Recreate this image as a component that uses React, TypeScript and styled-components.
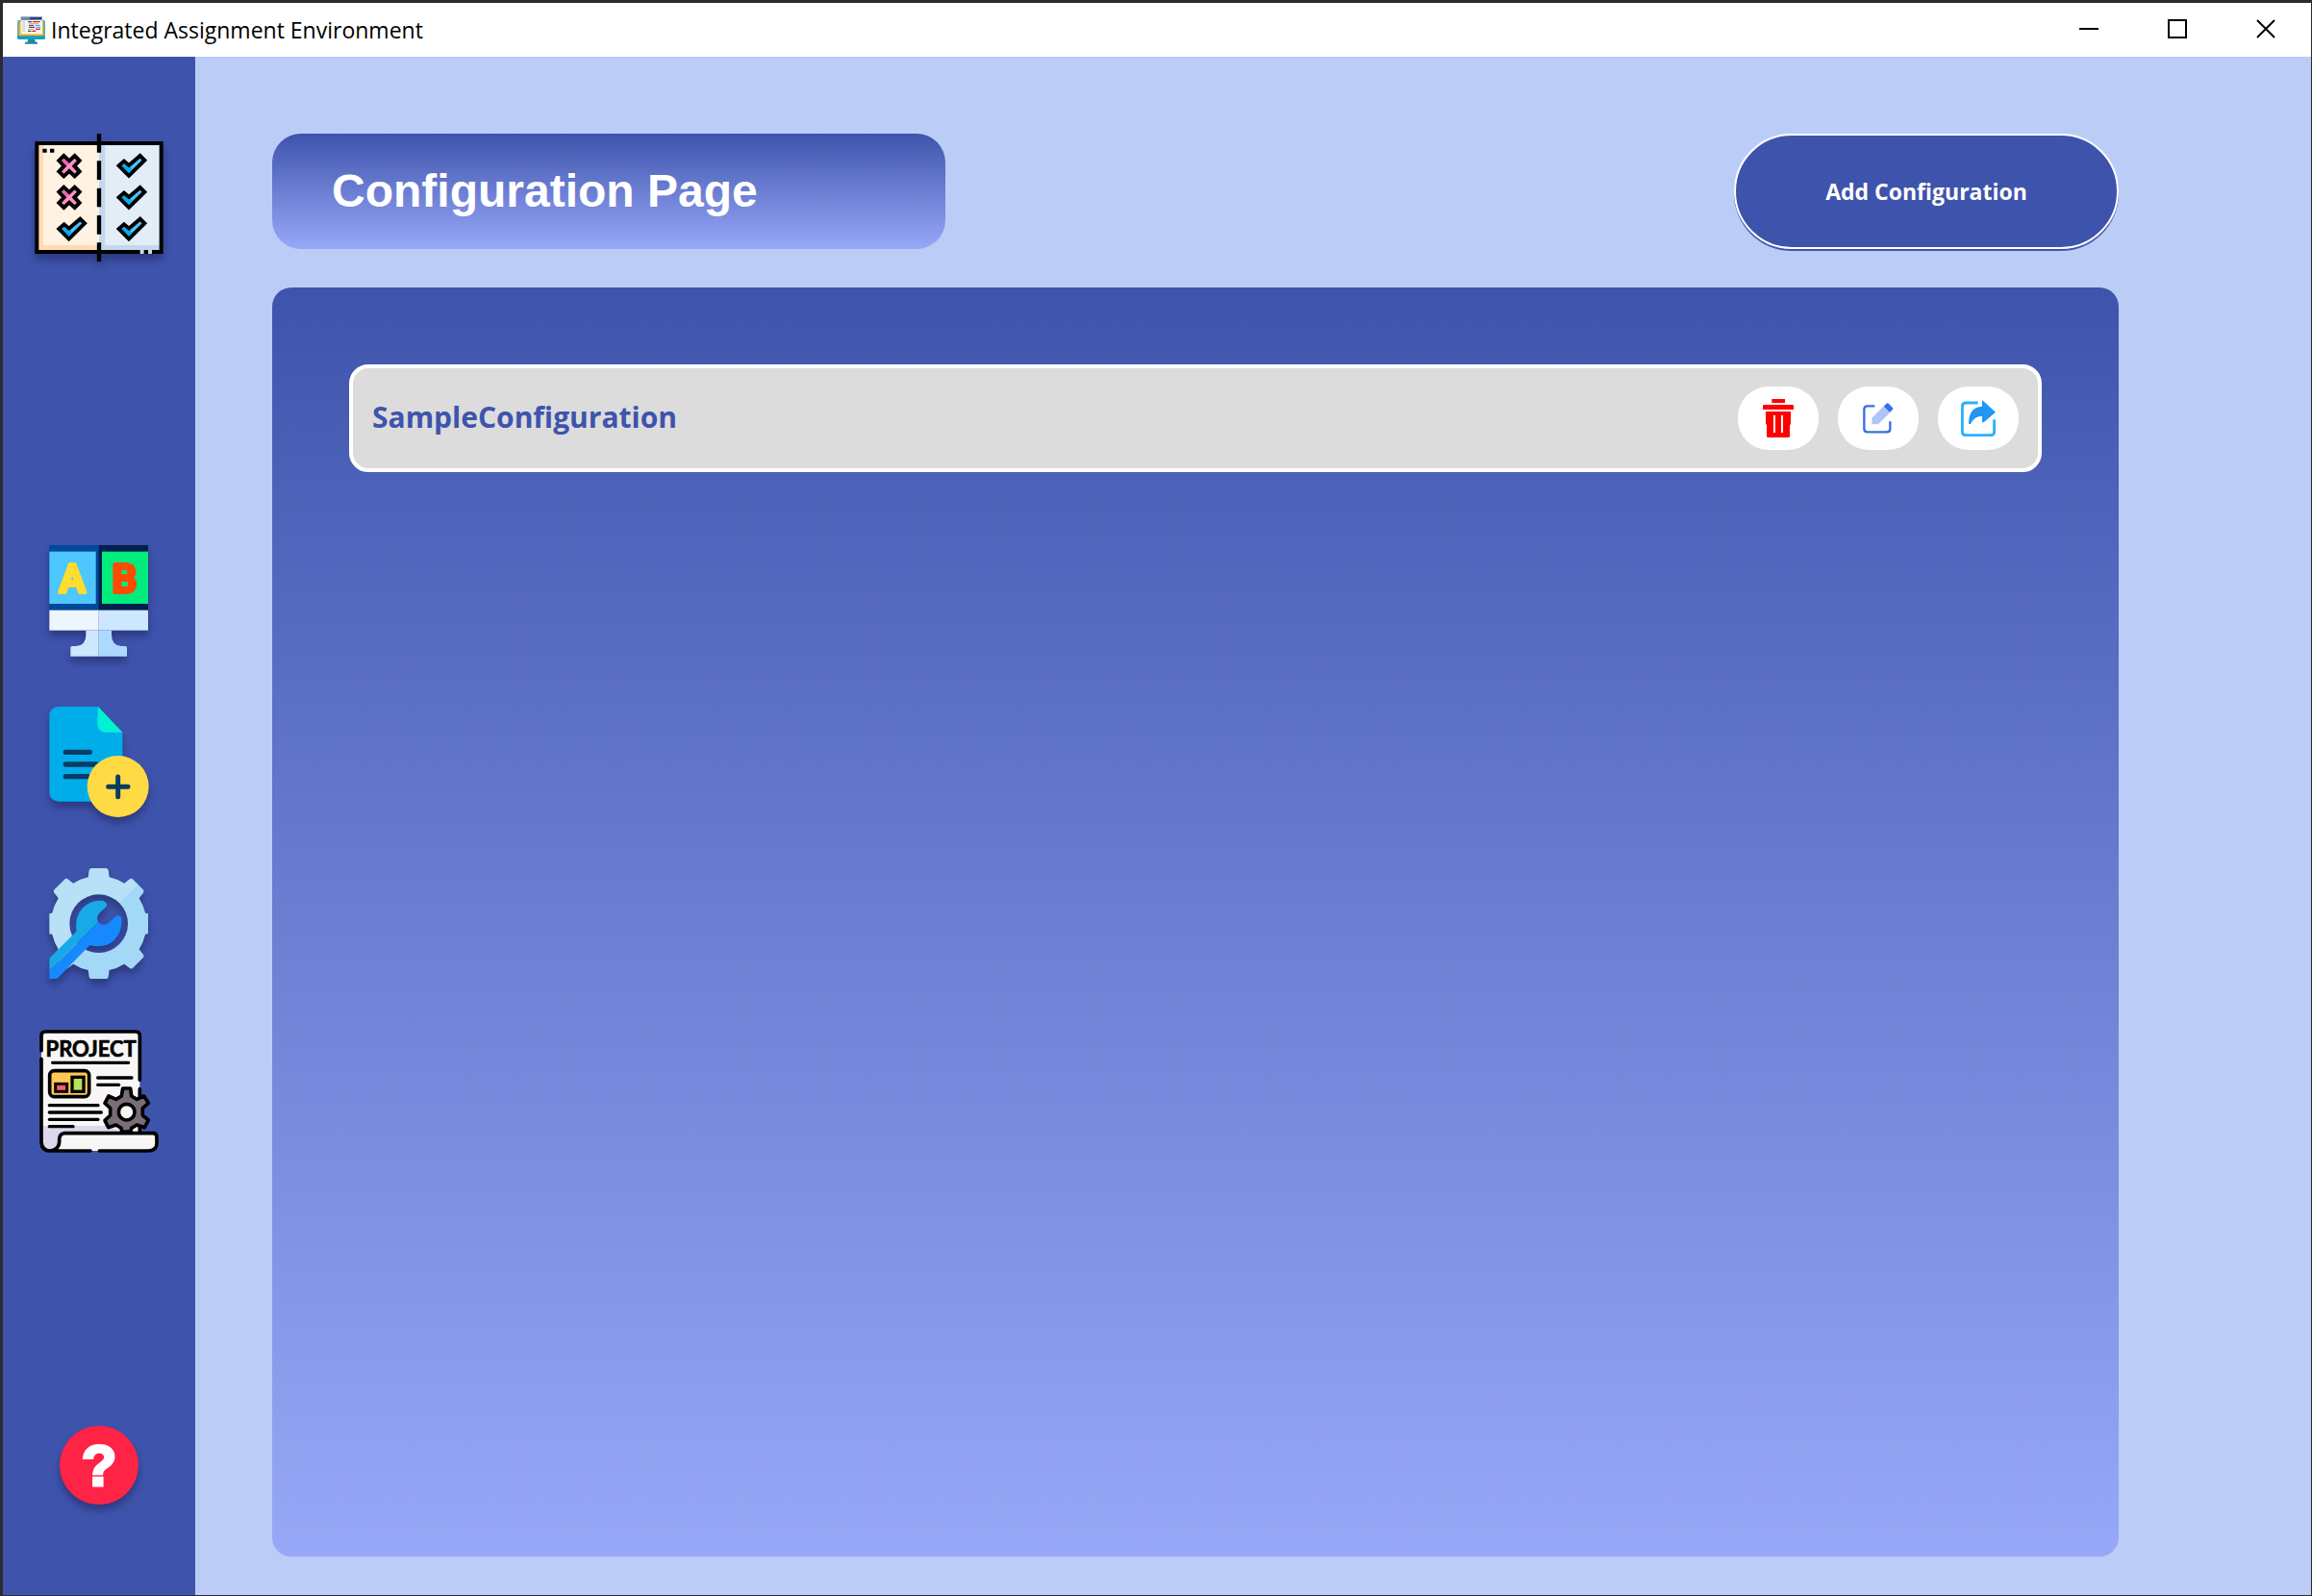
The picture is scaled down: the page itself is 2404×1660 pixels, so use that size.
import React from "react";
import styled, { createGlobalStyle } from "styled-components";

const GlobalStyle = createGlobalStyle`
  * { box-sizing: border-box; }
  body { margin: 0; background: #2b2b2e; }
  button { font: inherit; color: inherit; border: 0; background: none; padding: 0; cursor: pointer; }
`;

const uiFont = `"Segoe UI", "Open Sans", "Noto Sans", sans-serif`;

const Window = styled.div`
  min-height: 100vh;
  display: flex;
  flex-direction: column;
  border: 1px solid #2b2b2e;
  border-width: 3px 1px 1px 3px;
  font-family: ${uiFont};
  background: #bbccf7;
`;

const TitleBar = styled.header`
  display: flex;
  align-items: center;
  height: 56px;
  padding: 0 1px 0 15px;
  background: #ffffff;
`;

const TitleText = styled.span`
  flex: 1;
  margin-left: 6px;
  font-size: 23px;
  line-height: 32px;
  color: #000000;
`;

const WindowButton = styled.button`
  display: flex;
  align-items: center;
  justify-content: center;
  width: 92px;
  height: 54px;
  align-self: flex-start;
`;

const Body = styled.div`
  flex: 1;
  display: flex;
`;

const Sidebar = styled.nav`
  width: 200px;
  flex: none;
  display: flex;
  flex-direction: column;
  align-items: center;
  padding: 79px 0 93px;
  background: #3e54ac;
`;

const NavGroup = styled.div`
  display: flex;
  flex-direction: column;
  align-items: center;
  gap: 51px;
  margin-top: 294px;
`;

const NavButton = styled.button<{ $flat?: boolean; $last?: boolean }>`
  display: block;
  margin-top: ${(p) => (p.$last ? "auto" : "0")};
  filter: ${(p) => (p.$flat ? "none" : "drop-shadow(0 6px 4px rgba(20, 24, 70, 0.45))")};

  svg { display: block; }
`;

const Main = styled.main`
  flex: 1;
  display: flex;
  flex-direction: column;
  gap: 40px;
  padding: 80px 200px 40px 80px;
`;

const PageHeader = styled.div`
  display: flex;
  justify-content: space-between;
`;

const PageTitle = styled.h1`
  width: 700px;
  height: 120px;
  margin: 0;
  padding-left: 62px;
  border-radius: 30px;
  background: linear-gradient(#3e54ac, #98a8f8);
  color: #ffffff;
  font: bold 48px/120px Arial, "Liberation Sans", sans-serif;
`;

const AddButton = styled.button`
  width: 400px;
  height: 120px;
  border: 2px solid #ffffff;
  border-radius: 60px;
  background: #3e54ac;
  box-shadow: 0 2px 0 #3e54ac;
  color: #ffffff;
  font-weight: 700;
  font-size: 23px;
  line-height: 32px;
`;

const Panel = styled.section`
  flex: 1;
  padding: 80px;
  border-radius: 20px;
  background: linear-gradient(#3e54ac, #98a8f8);
`;

const ConfigRow = styled.article`
  display: flex;
  align-items: center;
  gap: 20px;
  height: 112px;
  padding: 0 20px;
  border: 4px solid #ffffff;
  border-radius: 20px;
  background: #dcdcdc;
`;

const ConfigName = styled.h2`
  flex: 1;
  margin: 0;
  padding-bottom: 2px;
  color: #3e54ac;
  font-size: 30px;
  line-height: 40px;
  font-weight: 700;
`;

const ActionButton = styled.button`
  display: flex;
  align-items: center;
  justify-content: center;
  width: 84px;
  height: 66px;
  border-radius: 32px;
  background: #ffffff;
`;

const AppIcon = () => (
  <svg width="29" height="29" viewBox="54 48 87 87" aria-hidden="true">
    <rect x="54" y="60" width="87" height="60" rx="6" fill="#5aa9b8" />
    <rect x="59" y="65" width="77" height="44" fill="#fdb813" />
    <path d="M54 109h87v5a6 6 0 0 1-6 6H60a6 6 0 0 1-6-6z" fill="#16a0c4" />
    <path d="M88 120h20l3 8h6v6H78v-6h7z" fill="#1f86a4" />
    <rect x="65" y="49" width="67" height="54" fill="#f4f6f8" />
    <rect x="65" y="49" width="67" height="11" fill="#7588a6" />
    <path d="M93 54h36" stroke="#123a63" strokeWidth="5" />
    <path d="M70 65h8M70 72h8M70 79h8M70 86h8M70 93h8" stroke="#aebccc" strokeWidth="3" />
    <path d="M87 65h12M90 82h18M87 94h10" stroke="#1d5b8a" strokeWidth="4" />
    <path d="M102 65h23M90 76h15M111 88h15M100 94h12" stroke="#d81b60" strokeWidth="4" />
    <path d="M90 70h30M87 88h18" stroke="#f2a51a" strokeWidth="3" />
    <path d="M109 76h16M112 82h14" stroke="#2aa3c9" strokeWidth="3" />
  </svg>
);

const Check = ({ x, y }: { x: number; y: number }) => (
  <g transform={`translate(${x} ${y})`}>
    <path d="M2 0L18-14L33-1L68-31L82-17L33 31Z" fill="#4fc3f7" stroke="#000" strokeWidth="12" />
    <path d="M11 0L18-6L33 7L39 3L42 15L33 23Z" fill="#00aeef" />
  </g>
);

const Cross = ({ x, y }: { x: number; y: number }) => (
  <g transform={`translate(${x} ${y})`}>
    <path
      d="M-17-32L0-16L17-32L32-17L16 0L32 17L17 32L0 16L-17 32L-32 17L-16 0L-32-17Z"
      fill="#ff8fc7"
      stroke="#000"
      strokeWidth="12"
    />
    <path d="M-17-24L-24-17L-10-3L-3-3L-3-10Z" fill="#f25fa8" />
  </g>
);

const ChecklistIcon = () => (
  <svg width="134" height="134" viewBox="48 24 402 402" aria-hidden="true">
    <rect x="55" y="57" width="195" height="339" fill="#ffdcb0" />
    <rect x="75" y="62" width="175" height="313" fill="#fff2e2" />
    <rect x="249" y="57" width="194" height="339" fill="#c3d8ec" />
    <rect x="268" y="62" width="170" height="313" fill="#e3edf7" />
    <rect x="55" y="57" width="388" height="339" fill="none" stroke="#000" strokeWidth="12" />
    <path d="M377 396h12M402 396h12" stroke="#c3d8ec" strokeWidth="12" />
    <path d="M249 27V86M249 112V171M249 197V256M249 282V341M249 367V426" stroke="#000" strokeWidth="13" />
    <path d="M73 80h13M96 80h13" stroke="#000" strokeWidth="12" />
    <Cross x={156} y={128} />
    <Cross x={156} y={226} />
    <Check x={122} y={324} />
    <Check x={309} y={127} />
    <Check x={309} y={226} />
    <Check x={309} y={324} />
  </svg>
);

const CompareIcon = () => (
  <svg width="104" height="117" viewBox="63 48 312 351" aria-hidden="true">
    <rect x="64" y="51" width="154" height="203" fill="#00489a" />
    <rect x="218" y="51" width="154" height="203" fill="#00204f" />
    <rect x="64" y="71" width="145" height="163" fill="#4ec7ff" />
    <rect x="228" y="71" width="144" height="163" fill="#00ec7c" />
    <rect x="64" y="254" width="154" height="63" fill="#edf5ff" />
    <rect x="218" y="254" width="154" height="63" fill="#cde7ff" />
    <path d="M178 317h40v81h-88v-27q0-5 5-5h13q30-2 30-35z" fill="#cde7ff" />
    <path d="M218 317h40v14q0 33 30 35h13q5 0 5 5v27h-88z" fill="#aed9ff" />
    <g
      fontFamily="Roboto, sans-serif"
      fontWeight="500"
      fontSize="122"
      textAnchor="middle"
      strokeWidth="12"
      strokeLinejoin="round"
    >
      <text x="136" y="197" fill="#ffdd2e" stroke="#ffdd2e">A</text>
      <text x="298" y="197" fill="#ff4b00" stroke="#ff4b00">B</text>
    </g>
  </svg>
);

const NewFileIcon = () => (
  <svg width="104" height="117" viewBox="63 42 312 351" aria-hidden="true">
    <path d="M92 45H216L292 125V341H92Q64 337 64 313V73Q64 49 92 45Z" fill="#00adeb" />
    <path d="M216 45L292 125H240Q214 123 214 98Z" fill="#00f2d5" />
    <path d="M115 187h75M115 225h95M115 263h80" stroke="#0a3b66" strokeWidth="16" strokeLinecap="round" />
    <circle cx="278" cy="294" r="96" fill="#ffda44" />
    <path d="M278 264v62M248 295h61" stroke="#0a3b66" strokeWidth="15" strokeLinecap="round" />
  </svg>
);

const toothAngles = [0, 45, 90, 135, 180, 225, 270, 315];

const SettingsIcon = () => (
  <svg width="104" height="117" viewBox="63 51 312 351" aria-hidden="true">
    <defs>
      <mask id="gearHole">
        <rect x="0" y="0" width="450" height="450" fill="#fff" />
        <circle cx="218" cy="227" r="91" fill="#000" />
      </mask>
      <linearGradient id="gearTone" gradientUnits="userSpaceOnUse" x1="118" y1="127" x2="318" y2="327">
        <stop offset="0.5" stopColor="#b8e0f6" />
        <stop offset="0.5" stopColor="#a3d9f6" />
      </linearGradient>
      <clipPath id="gearShape">
        <circle cx="218" cy="227" r="149" />
        {toothAngles.map((a) => (
          <path key={a} d="M184 90L188 60Q190 54 196 54H240Q246 54 248 60L252 90Z" transform={`rotate(${a} 218 227)`} />
        ))}
      </clipPath>
    </defs>
    <g mask="url(#gearHole)">
      <rect x="64" y="40" width="308" height="370" fill="url(#gearTone)" clipPath="url(#gearShape)" />
    </g>
    <path
      d="M64 335L148 251Q142 205 168 178Q196 150 232 156Q249 163 241 175L222 192Q208 206 216 222L64 374Z"
      fill="#18aae6"
    />
    <path
      d="M64 374L216 222Q230 238 248 226L271 204Q283 196 289 210Q293 252 266 279Q238 305 190 295L88 399H64Z"
      fill="#1789ff"
    />
  </svg>
);

const ProjectIcon = () => (
  <svg width="125" height="130" viewBox="33 30 375 390" aria-hidden="true">
    <path d="M50 39H335Q346 39 346 50V356H390Q400 356 400 366V390Q400 411 378 411H62Q39 408 39 386V50Q39 39 50 39Z" fill="#f8f7f6" />
    <path d="M42 333H240L300 354H116Q96 356 95 385Q92 406 66 408Q42 406 42 384Z" fill="#dcd9ec" />
    <path
      d="M39 98V52Q39 39 52 39H333Q346 39 346 52V190M39 124V382Q40 411 68 411H192M346 218V352M220 411H372Q399 411 399 388V368Q399 356 387 356H112Q96 357 95 374V384Q93 407 68 411"
      fill="none"
      stroke="#000"
      strokeWidth="11"
      strokeLinecap="round"
    />
    <text
      x="194"
      y="117"
      textAnchor="middle"
      fontFamily="Lato, sans-serif"
      fontWeight="700"
      fontSize="66"
      stroke="#000"
      strokeWidth="2"
      strokeLinejoin="round"
    >
      PROJECT
    </text>
    <path
      d="M74 136H311M215 183H321M215 205H281M64 269H216M64 291H226M64 313H216M64 335H138"
      stroke="#000"
      strokeWidth="10"
      strokeLinecap="round"
    />
    <rect x="65" y="161" width="123" height="81" rx="14" fill="#ffc857" stroke="#000" strokeWidth="11" />
    <rect x="83" y="202" width="36" height="24" fill="#ff5a67" stroke="#000" strokeWidth="9" />
    <rect x="135" y="181" width="36" height="45" fill="#b6e05a" stroke="#000" strokeWidth="10" />
    <path
      d="M293 216H317L320 240L337 250L359 240L373 262L355 278V300L373 315L361 338L337 330L320 340L318 351H290L288 340L272 330L248 338L237 316L254 300V278L237 262L249 240L272 250L289 240Z"
      fill="#796d78"
      stroke="#000"
      strokeWidth="11"
      strokeLinejoin="round"
    />
    <circle cx="305" cy="290" r="25" fill="#f8f7f6" stroke="#000" strokeWidth="11" />
  </svg>
);

const HelpIcon = () => (
  <svg width="84" height="84" viewBox="0 0 84 84" aria-hidden="true">
    <circle cx="42" cy="42" r="41" fill="#ff2346" />
    <text
      x="42"
      y="63"
      textAnchor="middle"
      fontFamily="Liberation Sans, Arial, sans-serif"
      fontWeight="700"
      fontSize="60"
      fill="#fff"
      stroke="#fff"
      strokeWidth="3"
    >
      ?
    </text>
  </svg>
);

const TrashIcon = () => (
  <svg width="32" height="40" viewBox="159 165 96 120" aria-hidden="true">
    <path d="M187 165h41v12h-41zM163 183h88q4 0 4 4v11h-96v-11q0-4 4-4z" fill="#ff0000" />
    <path d="M168 204h78v40l-3 2v35q0 4-4 4h-64q-4 0-4-4v-35l-3-4z" fill="#ff0000" />
    <path d="M195 216v54M219 216v54" stroke="#fff" strokeWidth="6" />
  </svg>
);

const EditIcon = () => (
  <svg width="32" height="32" viewBox="470 179 96 96" aria-hidden="true">
    <path
      d="M507 189H484Q474 189 474 199V260Q474 270 484 270H545Q555 270 555 260V237"
      fill="none"
      stroke="#376fea"
      strokeWidth="7"
    />
    <path d="M498 246V226L534 190L554 210L518 246Z" fill="#afc4f8" />
    <path d="M535 190L543 182Q547 178 551 182L562 193Q566 197 562 201L554 209Z" fill="#376fea" />
  </svg>
);

const ShareIcon = () => (
  <svg width="36" height="38" viewBox="777 165 108 114" aria-hidden="true">
    <path
      d="M830 174H793Q781 174 781 186V263Q781 275 793 275H869Q881 275 881 263V226"
      fill="none"
      stroke="#29b1ff"
      strokeWidth="9"
    />
    <path d="M843 165L885 203L848 235H843V216Q820 214 807 240H801Q800 188 843 185Z" fill="#2196f3" />
  </svg>
);

const MinimizeGlyph = () => (
  <svg width="20" height="20" viewBox="0 0 20 20" aria-hidden="true">
    <path d="M0 10h20" stroke="#000" strokeWidth="2" />
  </svg>
);

const MaximizeGlyph = () => (
  <svg width="20" height="20" viewBox="0 0 20 20" aria-hidden="true">
    <rect x="1" y="1" width="18" height="18" fill="none" stroke="#000" strokeWidth="2" />
  </svg>
);

const CloseGlyph = () => (
  <svg width="20" height="20" viewBox="0 0 20 20" aria-hidden="true">
    <path d="M1 1l18 18M19 1L1 19" stroke="#000" strokeWidth="2" />
  </svg>
);

const configurations = ["SampleConfiguration"];

export default function App() {
  return (
    <>
      <GlobalStyle />
      <Window>
        <TitleBar>
          <AppIcon />
          <TitleText>Integrated Assignment Environment</TitleText>
          <WindowButton aria-label="Minimize"><MinimizeGlyph /></WindowButton>
          <WindowButton aria-label="Maximize"><MaximizeGlyph /></WindowButton>
          <WindowButton aria-label="Close"><CloseGlyph /></WindowButton>
        </TitleBar>
        <Body>
          <Sidebar>
            <NavButton aria-label="Home"><ChecklistIcon /></NavButton>
            <NavGroup>
              <NavButton aria-label="Compare outputs"><CompareIcon /></NavButton>
              <NavButton aria-label="New file"><NewFileIcon /></NavButton>
              <NavButton aria-label="Configurations"><SettingsIcon /></NavButton>
              <NavButton aria-label="Projects" $flat><ProjectIcon /></NavButton>
            </NavGroup>
            <NavButton aria-label="Help" $last><HelpIcon /></NavButton>
          </Sidebar>
          <Main>
            <PageHeader>
              <PageTitle>Configuration Page</PageTitle>
              <AddButton>Add Configuration</AddButton>
            </PageHeader>
            <Panel>
              {configurations.map((name) => (
                <ConfigRow key={name}>
                  <ConfigName>{name}</ConfigName>
                  <ActionButton aria-label={`Delete ${name}`}><TrashIcon /></ActionButton>
                  <ActionButton aria-label={`Edit ${name}`}><EditIcon /></ActionButton>
                  <ActionButton aria-label={`Share ${name}`}><ShareIcon /></ActionButton>
                </ConfigRow>
              ))}
            </Panel>
          </Main>
        </Body>
      </Window>
    </>
  );
}
